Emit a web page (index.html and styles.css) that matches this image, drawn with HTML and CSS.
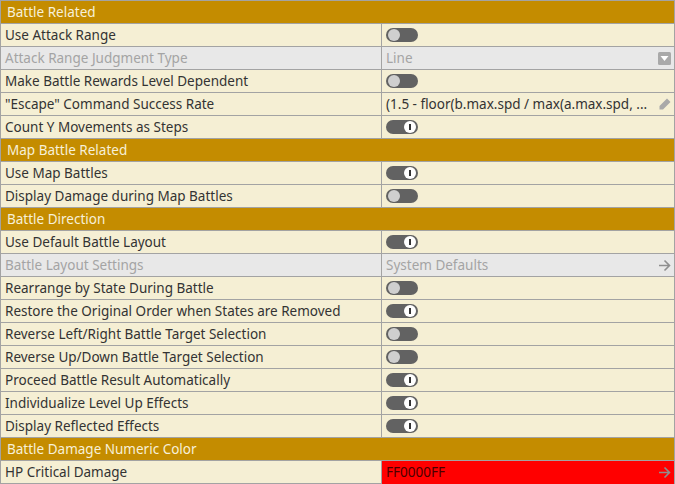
FILE: index.html
```html
<!DOCTYPE html>
<html lang="en">
<head>
    <meta charset="UTF-8">
    <title>Battle Settings</title>
    <link rel="stylesheet" href="styles.css">
</head>
<body>
    <div class="settings">
        <div class="section">Battle Related</div>

        <div class="row">
            <div class="label">Use Attack Range</div>
            <div class="value"><span class="toggle"></span></div>
        </div>
        <div class="row disabled">
            <div class="label">Attack Range Judgment Type</div>
            <div class="value">
                <span class="text">Line</span>
                <svg class="icon" width="13" height="13" viewBox="0 0 13 13"><rect width="13" height="13" rx="1.5" fill="#a9a9a9"/><path d="M2.5 4 H10.5 L6.5 9 Z" fill="#fff"/></svg>
            </div>
        </div>
        <div class="row">
            <div class="label">Make Battle Rewards Level Dependent</div>
            <div class="value"><span class="toggle"></span></div>
        </div>
        <div class="row">
            <div class="label">"Escape" Command Success Rate</div>
            <div class="value">
                <span class="text">(1.5 - floor(b.max.spd / max(a.max.spd, ...</span>
                <svg class="icon" width="13" height="13" viewBox="0 0 13 13"><path d="M9 0.5 L12.5 4 L5 11.5 L1.5 11.5 L1.5 8 Z" fill="#a9a9a9"/></svg>
            </div>
        </div>
        <div class="row">
            <div class="label">Count Y Movements as Steps</div>
            <div class="value"><span class="toggle on"></span></div>
        </div>

        <div class="section">Map Battle Related</div>

        <div class="row">
            <div class="label">Use Map Battles</div>
            <div class="value"><span class="toggle on"></span></div>
        </div>
        <div class="row">
            <div class="label">Display Damage during Map Battles</div>
            <div class="value"><span class="toggle"></span></div>
        </div>

        <div class="section">Battle Direction</div>

        <div class="row">
            <div class="label">Use Default Battle Layout</div>
            <div class="value"><span class="toggle on"></span></div>
        </div>
        <div class="row disabled">
            <div class="label">Battle Layout Settings</div>
            <div class="value">
                <span class="text">System Defaults</span>
                <svg class="icon" width="13" height="13" viewBox="0 0 13 13"><path d="M1 6.5 H11.5 M6.5 1.5 L11.5 6.5 L6.5 11.5" fill="none" stroke="#8e8e8e" stroke-width="1.6"/></svg>
            </div>
        </div>
        <div class="row">
            <div class="label">Rearrange by State During Battle</div>
            <div class="value"><span class="toggle"></span></div>
        </div>
        <div class="row">
            <div class="label">Restore the Original Order when States are Removed</div>
            <div class="value"><span class="toggle on"></span></div>
        </div>
        <div class="row">
            <div class="label">Reverse Left/Right Battle Target Selection</div>
            <div class="value"><span class="toggle"></span></div>
        </div>
        <div class="row">
            <div class="label">Reverse Up/Down Battle Target Selection</div>
            <div class="value"><span class="toggle"></span></div>
        </div>
        <div class="row">
            <div class="label">Proceed Battle Result Automatically</div>
            <div class="value"><span class="toggle on"></span></div>
        </div>
        <div class="row">
            <div class="label">Individualize Level Up Effects</div>
            <div class="value"><span class="toggle on"></span></div>
        </div>
        <div class="row">
            <div class="label">Display Reflected Effects</div>
            <div class="value"><span class="toggle on"></span></div>
        </div>

        <div class="section">Battle Damage Numeric Color</div>

        <div class="row">
            <div class="label">HP Critical Damage</div>
            <div class="value color-value">
                <span class="text">FF0000FF</span>
                <svg class="icon" width="13" height="13" viewBox="0 0 13 13"><path d="M1 6.5 H11.5 M6.5 1.5 L11.5 6.5 L6.5 11.5" fill="none" stroke="#8e8e8e" stroke-width="1.6"/></svg>
            </div>
        </div>
    </div>
</body>
</html>
```

FILE: styles.css
```css
/* General */
body {
    margin: 0;
    padding: 0;
    font-family: "Noto Sans", "Open Sans", sans-serif;
    font-size: 13.5px;
    color: #333;
    background-color: #f5efd4;
}

.settings {
    width: 675px;
    box-sizing: border-box;
    border: 1px solid #a3a3a3;
    border-bottom: none;
}

/* Section headers */
.section {
    height: 22px;
    line-height: 23px;
    padding-left: 6px;
    background-color: #c48c00;
    color: #f7f0d8;
    border-bottom: 1px solid #a3a3a3;
}

/* Setting rows */
.row {
    display: grid;
    grid-template-columns: 381px 1fr;
    height: 22px;
    border-bottom: 1px solid #a3a3a3;
    background-color: #f5efd4;
}

.label {
    padding-left: 4px;
    line-height: 23px;
    border-right: 1px solid #a3a3a3;
    white-space: nowrap;
    overflow: hidden;
}

.value {
    display: flex;
    align-items: center;
    gap: 2px;
    padding: 0 3px 0 4px;
    min-width: 0;
    line-height: 23px;
}

.value .text {
    flex: 1;
    white-space: nowrap;
}

.value .icon {
    flex-shrink: 0;
}

.row.disabled {
    background-color: #e8e8e8;
    color: #a4a4a4;
}

.color-value {
    background-color: #ff0000;
    color: #4a0000;
}

/* Toggle switch */
.toggle {
    position: relative;
    display: inline-block;
    width: 32px;
    height: 14px;
    border-radius: 7px;
    background-color: #626262;
}

.toggle::after {
    content: "";
    position: absolute;
    top: 1px;
    left: 2px;
    width: 12px;
    height: 12px;
    border-radius: 50%;
    background-color: #cfcfcf;
}

.toggle.on::after {
    left: auto;
    right: 2px;
    background-color: #fff;
}

.toggle.on::before {
    content: "";
    position: absolute;
    top: 4px;
    right: 7px;
    width: 2px;
    height: 6px;
    background-color: #333;
    z-index: 1;
}
```
